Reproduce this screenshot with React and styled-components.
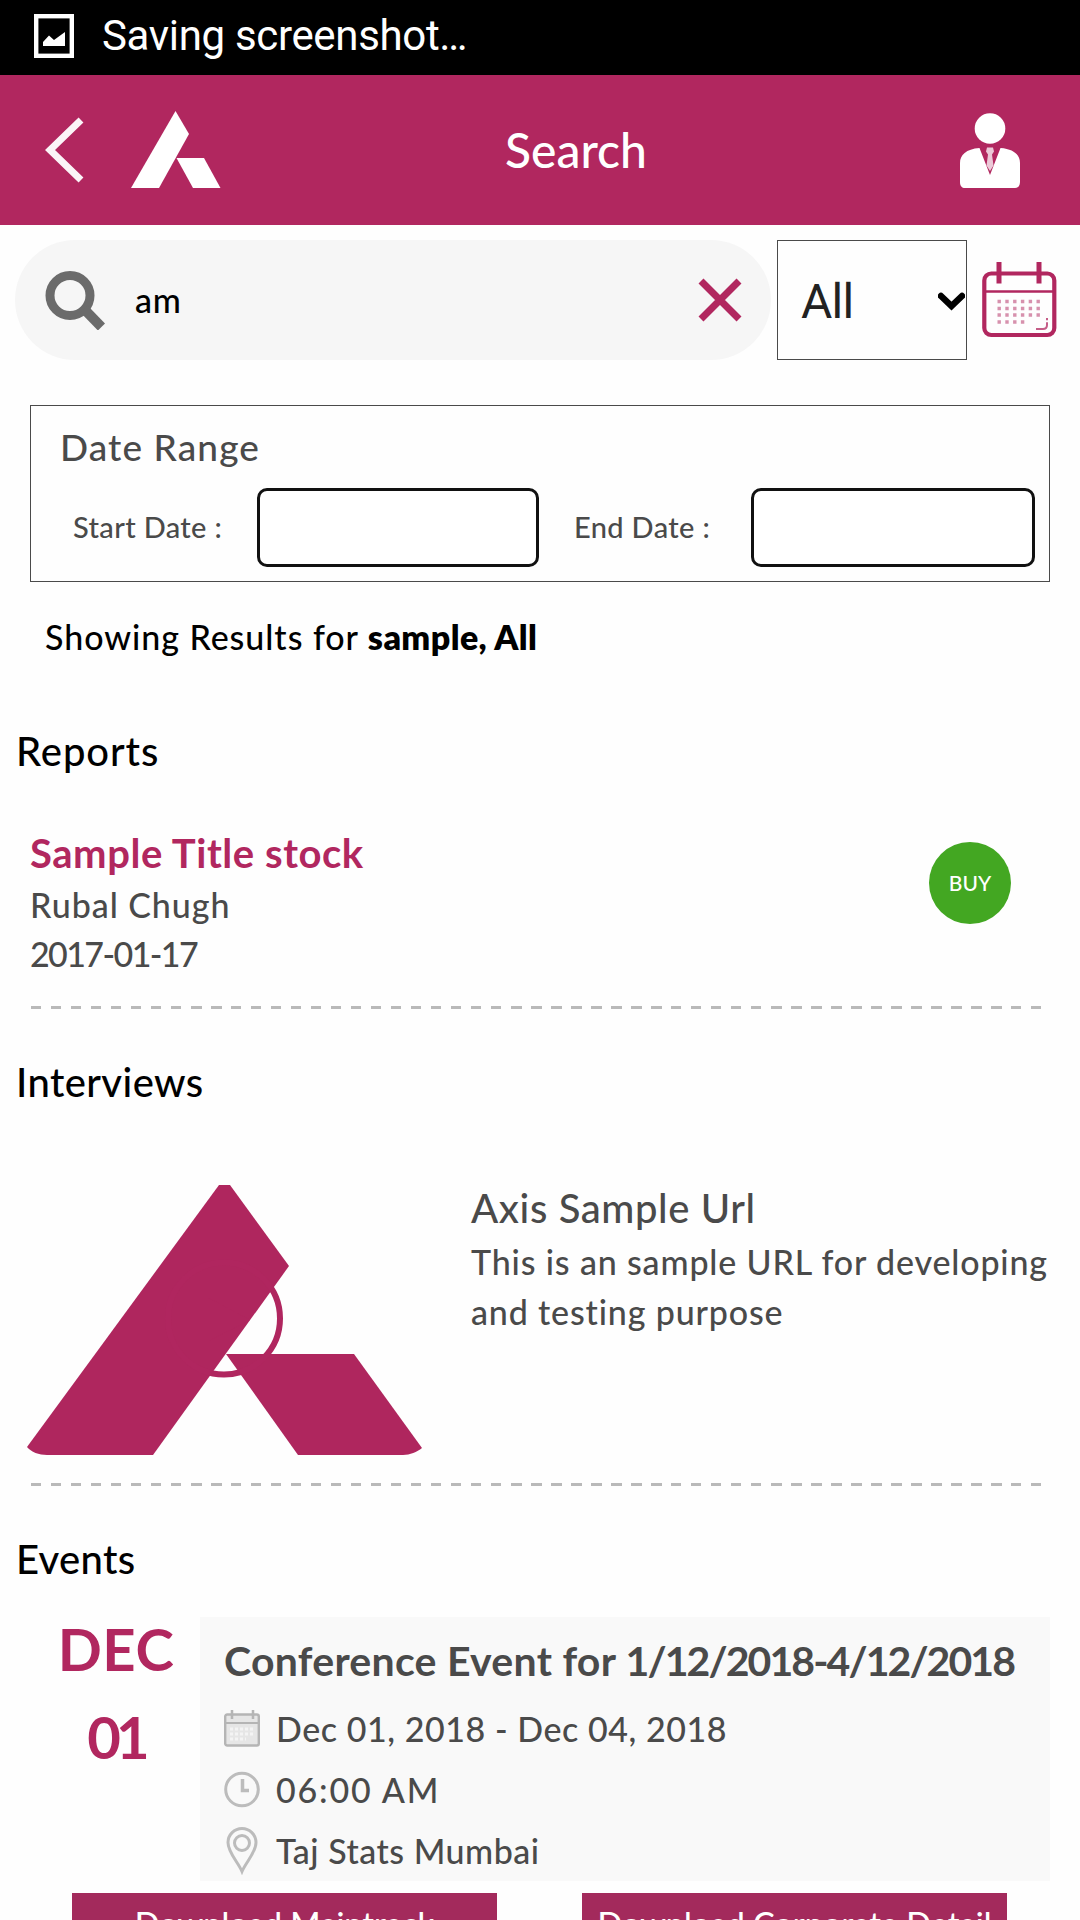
import React from "react";
import styled, { createGlobalStyle } from "styled-components";

const brand = "#b1275f";
const ink = "#4a4a4a";

const GlobalStyle = createGlobalStyle`
  *, *::before, *::after { box-sizing: border-box; }
  body { margin: 0; background: #fefefe; overflow: hidden; }
  svg { display: block; flex: none; }
`;

const Screen = styled.div`
  width: 1080px;
  height: 1920px;
  overflow: hidden;
  display: flex;
  flex-direction: column;
  background: #fefefe;
  color: ${ink};
  font-family: Lato, "Open Sans", sans-serif;
  font-weight: 500;
  white-space: nowrap;
`;

const StatusBar = styled.div`
  flex: none;
  height: 75px;
  display: flex;
  align-items: center;
  gap: 28px;
  padding: 0 0 4px 34px;
  background: #000;
  color: #fff;
  font: 400 42px/50px Roboto, sans-serif;
  letter-spacing: -0.33px;
`;

const Header = styled.header`
  flex: none;
  height: 150px;
  display: flex;
  align-items: center;
  padding: 0 60px 0 45px;
  background: ${brand};
  color: #fff;
`;

const LogoLink = styled.a`
  margin-left: 44px;
`;

const HeaderTitle = styled.h1`
  flex: 1;
  margin: 0;
  padding: 0 30px 1px 0;
  text-align: center;
  font-size: 48px;
  font-weight: 500;
  line-height: 60px;
`;

const SearchRow = styled.div`
  flex: none;
  height: 120px;
  margin: 15px 23px 0 15px;
  display: flex;
  align-items: center;
`;

const SearchField = styled.div`
  width: 756px;
  height: 120px;
  padding: 0 29px 0 30px;
  border-radius: 60px;
  background: #f6f6f6;
  display: flex;
  align-items: center;
`;

const SearchText = styled.span`
  flex: 1;
  margin-left: 30px;
  color: #000;
  font-size: 34px;
  line-height: 40px;
  letter-spacing: 0.8px;
`;

const TypeSelect = styled.div`
  width: 190px;
  height: 120px;
  margin: 0 15px 0 6px;
  padding: 3px 1px 0 23px;
  border: 1px solid ${ink};
  display: flex;
  align-items: center;
  justify-content: space-between;
  color: #222;
  font: 400 48px/60px Roboto, sans-serif;
  letter-spacing: -0.8px;
`;

const DateBox = styled.section`
  flex: none;
  height: 177px;
  margin: 45px 30px 0;
  padding: 18px 15px 0 29px;
  border: 1px solid ${ink};
`;

const DateTitle = styled.div`
  font-size: 37px;
  line-height: 46px;
  letter-spacing: 1.1px;
`;

const DateFields = styled.div`
  margin-top: 18px;
  padding-left: 13px;
  display: grid;
  grid-template-columns: 184px 282px 212px 284px;
  align-items: center;
`;

const DateLabel = styled.label`
  padding: 0 0 2px ${(p) => p.$indent || 0}px;
  font-size: 29px;
  line-height: 40px;
  letter-spacing: 0.35px;
`;

const DateInput = styled.div`
  height: 79px;
  border: 3px solid #111;
  border-radius: 10px;
  background: #fff;
`;

const ResultsLine = styled.p`
  flex: none;
  margin: 35px 0 0 45px;
  color: #000;
  font-size: 34px;
  line-height: 40px;
  letter-spacing: 0.95px;

  b {
    font-weight: 800;
    letter-spacing: 0.4px;
  }
`;

const SectionTitle = styled.h2`
  flex: none;
  margin: ${(p) => p.$top}px 0 0 16px;
  color: #000;
  font-size: 40px;
  font-weight: 500;
  line-height: 48px;
  letter-spacing: ${(p) => p.$spacing}px;
`;

const ReportItem = styled.article`
  flex: none;
  margin-top: 53px;
  padding: 0 69px 0 30px;
  display: flex;
  justify-content: space-between;
  align-items: flex-start;
`;

const ReportTitle = styled.h3`
  margin: 0 0 2px;
  color: ${brand};
  font-size: 40px;
  font-weight: 700;
  line-height: 50px;
  letter-spacing: 0.55px;
`;

const ReportMeta = styled.div`
  font-size: 34px;
  line-height: 49px;
  letter-spacing: ${(p) => p.$spacing}px;
`;

const BuyBadge = styled.span`
  width: 82px;
  height: 82px;
  margin-top: 14px;
  border-radius: 50%;
  background: #43a722;
  color: #fff;
  text-align: center;
  font-size: 21px;
  font-weight: 500;
  line-height: 81px;
`;

const DashedRule = styled.div`
  flex: none;
  height: 3px;
  margin: ${(p) => p.$top}px 38px 0 31px;
  background: repeating-linear-gradient(90deg, #b9b9b9 0 10.5px, transparent 10.5px 20px);
`;

const InterviewItem = styled.article`
  flex: none;
  margin-top: 79px;
  padding-left: 27px;
  display: flex;
  gap: 49px;
`;

const InterviewBody = styled.div`
  margin-top: -2px;
`;

const InterviewTitle = styled.h3`
  margin: 0 0 4px;
  font-size: 40px;
  font-weight: 500;
  line-height: 50px;
  letter-spacing: 0.6px;
`;

const InterviewText = styled.p`
  margin: 0;
  width: 590px;
  white-space: normal;
  font-size: 34px;
  line-height: 50px;
  letter-spacing: 0.84px;
`;

const EventItem = styled.article`
  flex: none;
  margin: 34px 30px 0;
  display: flex;
`;

const EventDate = styled.div`
  width: 170px;
  margin-top: -12px;
  padding-left: 2px;
  display: flex;
  flex-direction: column;
  align-items: center;
  color: ${brand};
  font-size: 58px;
  font-weight: 700;
  line-height: 88px;
  letter-spacing: 0.6px;
`;

const EventDay = styled.span`
  letter-spacing: -5px;
`;

const EventCard = styled.div`
  flex: 1;
  height: 264px;
  padding: 19px 0 0 24px;
  background: #f9f9f9;
`;

const EventTitle = styled.h3`
  margin: 0 0 12px;
  font-size: 41px;
  font-weight: 700;
  line-height: 50px;
  letter-spacing: 0.27px;
`;

const Digits = styled.span`
  letter-spacing: -1.9px;
`;

const EventRow = styled.div`
  height: 61px;
  display: flex;
  align-items: center;
  gap: 16px;
  font-size: 34px;
  letter-spacing: ${(p) => p.$spacing}px;
`;

const Downloads = styled.div`
  flex: none;
  margin: 12px 73px 0 72px;
  display: flex;
  justify-content: space-between;
`;

const DownloadButton = styled.div`
  width: 425px;
  height: 62px;
  background: #a32a5c;
  color: #fff;
  text-align: center;
  font-size: 32.5px;
  line-height: 62px;
`;

const PictureIcon = () => (
  <svg width="40" height="44" viewBox="0 0 40 44">
    <rect x="2.2" y="2.2" width="35.6" height="39.6" fill="none" stroke="#fff" strokeWidth="4.4" />
    <path d="M9 32v-4l6-6.500 5 4.500L31 18v14z" fill="#fff" />
  </svg>
);

const BackIcon = () => (
  <svg width="40" height="66" viewBox="0 0 40 66">
    <path d="M36 3 5 33l31 30" fill="none" stroke="#fff" strokeWidth="7" opacity=".95" />
  </svg>
);

const LogoMark = () => (
  <svg width="93" height="80" viewBox="0 0 93 80" fill="#fff">
    <path d="M46.500 1 60 24 30 78H2z" />
    <path d="M47.500 48H75l16.500 30H64z" />
  </svg>
);

const UserIcon = () => (
  <svg width="60" height="75" viewBox="0 0 60 75" fill="#fff">
    <circle cx="30" cy="15.500" r="15.300" />
    <path d="M0 50c0-8 6-14 19.500-15L30 62l10.500-27C54 36 60 42 60 50v19c0 4-2 6-5 6H5c-3 0-5-2-5-6z" />
    <path d="M27 34.500h6l1 4-2 3 1.500 11L30 58l-3.500-5.500 1.500-11-2-3z" opacity=".75" />
  </svg>
);

const SearchIcon = () => (
  <svg width="60" height="60" viewBox="0 0 60 60" fill="none" stroke="#6b6b6b">
    <circle cx="25" cy="25.500" r="20" strokeWidth="9" />
    <path d="m39 39 17.500 18" strokeWidth="10" />
  </svg>
);

const ClearIcon = () => (
  <svg width="44" height="44" viewBox="0 0 44 44">
    <path d="m3 3 38 38M41 3 3 41" stroke={brand} strokeWidth="7" />
  </svg>
);

const ChevronIcon = () => (
  <svg width="27" height="20" viewBox="0 0 27 20">
    <path d="m3 4 10.500 10L24 4" fill="none" stroke="#000" strokeWidth="6.500" strokeLinecap="round" />
  </svg>
);

const CalendarIcon = () => (
  <svg width="75" height="77" viewBox="0 0 75 77" fill="none" stroke={brand}>
    <rect x="2.300" y="11.500" width="70" height="61.500" rx="7" strokeWidth="4.200" />
    <path d="M3 29.500h69" strokeWidth="2.400" />
    <path d="M17 0v21.500M57 0v21.500" strokeWidth="5" />
    <g strokeWidth="3.400" strokeDasharray="3.400 4.400" opacity=".5">
      <path d="M15.500 39.500h44M15.500 46.500h44M15.500 53h44" />
      <path d="M15.500 60h28" />
    </g>
    <path d="M54 67h7c3 0 4-2 4-4v-7" strokeWidth="2" strokeDasharray="16 2" opacity=".75" />
  </svg>
);

const InterviewLogo = () => (
  <svg width="395" height="270" viewBox="0 0 395 270">
    <path d="M192 0h11l59 81-136 189H20C12 270 4 267 0 262z" fill="#af265e" />
    <path d="M199 169h128l68 94c-5 4-12 7-19 7H271z" fill="#af265e" />
    <circle cx="197" cy="133.500" r="56" fill="none" stroke="#b0265f" strokeWidth="6" />
    <path d="M180 112v45l43-22z" fill="#af265e" />
  </svg>
);

const SmallCalendarIcon = () => (
  <svg width="36" height="37" viewBox="0 0 36 37" fill="none" stroke="#b5b5b5">
    <rect x="1.200" y="4.500" width="33.600" height="31" rx="2" strokeWidth="2.400" fill="#e6e6e6" />
    <path d="M1 13h34" strokeWidth="2" />
    <path d="M8 0v9M29 0v9" strokeWidth="2.500" />
    <path d="M6 19h25M6 24h25M6 29h16" stroke="#f4f4f4" strokeWidth="3" strokeDasharray="3 2" />
  </svg>
);

const ClockIcon = () => (
  <svg width="36" height="37" viewBox="0 0 36 37" fill="none" stroke="#bcbcbc">
    <circle cx="18" cy="18.500" r="16.300" strokeWidth="3" />
    <path d="M18.500 8v11.500H25" strokeWidth="3.500" />
  </svg>
);

const PinIcon = () => (
  <svg width="36" height="48" viewBox="0 0 36 48" fill="none" stroke="#bcbcbc">
    <path d="M18 44.500C14 35 4 25.500 4 15.500a14 14 0 0 1 28 0C32 25.500 22 35 18 44.500z" strokeWidth="3" />
    <circle cx="18" cy="16" r="7.500" strokeWidth="3" />
  </svg>
);

export default function App() {
  return (
    <Screen>
      <GlobalStyle />
      <StatusBar>
        <PictureIcon />
        <span>Saving screenshot…</span>
      </StatusBar>
      <Header>
        <BackIcon />
        <LogoLink>
          <LogoMark />
        </LogoLink>
        <HeaderTitle>Search</HeaderTitle>
        <UserIcon />
      </Header>

      <SearchRow>
        <SearchField>
          <SearchIcon />
          <SearchText>am</SearchText>
          <ClearIcon />
        </SearchField>
        <TypeSelect>
          <span>All</span>
          <ChevronIcon />
        </TypeSelect>
        <CalendarIcon />
      </SearchRow>

      <DateBox>
        <DateTitle>Date Range</DateTitle>
        <DateFields>
          <DateLabel>Start Date :</DateLabel>
          <DateInput />
          <DateLabel $indent={35}>End Date :</DateLabel>
          <DateInput />
        </DateFields>
      </DateBox>

      <ResultsLine>
        Showing Results for <b>sample, All</b>
      </ResultsLine>

      <SectionTitle $top={70} $spacing={0.9}>Reports</SectionTitle>
      <ReportItem>
        <div>
          <ReportTitle>Sample Title stock</ReportTitle>
          <ReportMeta $spacing={0.95}>Rubal Chugh</ReportMeta>
          <ReportMeta $spacing={-1.6}>2017-01-17</ReportMeta>
        </div>
        <BuyBadge>BUY</BuyBadge>
      </ReportItem>
      <DashedRule $top={28} />

      <SectionTitle $top={49} $spacing={0.4}>Interviews</SectionTitle>
      <InterviewItem>
        <InterviewLogo />
        <InterviewBody>
          <InterviewTitle>Axis Sample Url</InterviewTitle>
          <InterviewText>This is an sample URL for developing and testing purpose</InterviewText>
        </InterviewBody>
      </InterviewItem>
      <DashedRule $top={28} />

      <SectionTitle $top={49} $spacing={0.3}>Events</SectionTitle>
      <EventItem>
        <EventDate>
          <span>DEC</span>
          <EventDay>01</EventDay>
        </EventDate>
        <EventCard>
          <EventTitle>
            Conference Event for <Digits>1/12/2018-4/12/2018</Digits>
          </EventTitle>
          <EventRow $spacing={0.55}>
            <SmallCalendarIcon />
            Dec 01, 2018 - Dec 04, 2018
          </EventRow>
          <EventRow $spacing={1.8}>
            <ClockIcon />
            06:00 AM
          </EventRow>
          <EventRow $spacing={0.5}>
            <PinIcon />
            Taj Stats Mumbai
          </EventRow>
        </EventCard>
      </EventItem>
      <Downloads>
        <DownloadButton>Download Maintrack</DownloadButton>
        <DownloadButton>Download Corporate Detail</DownloadButton>
      </Downloads>
    </Screen>
  );
}
